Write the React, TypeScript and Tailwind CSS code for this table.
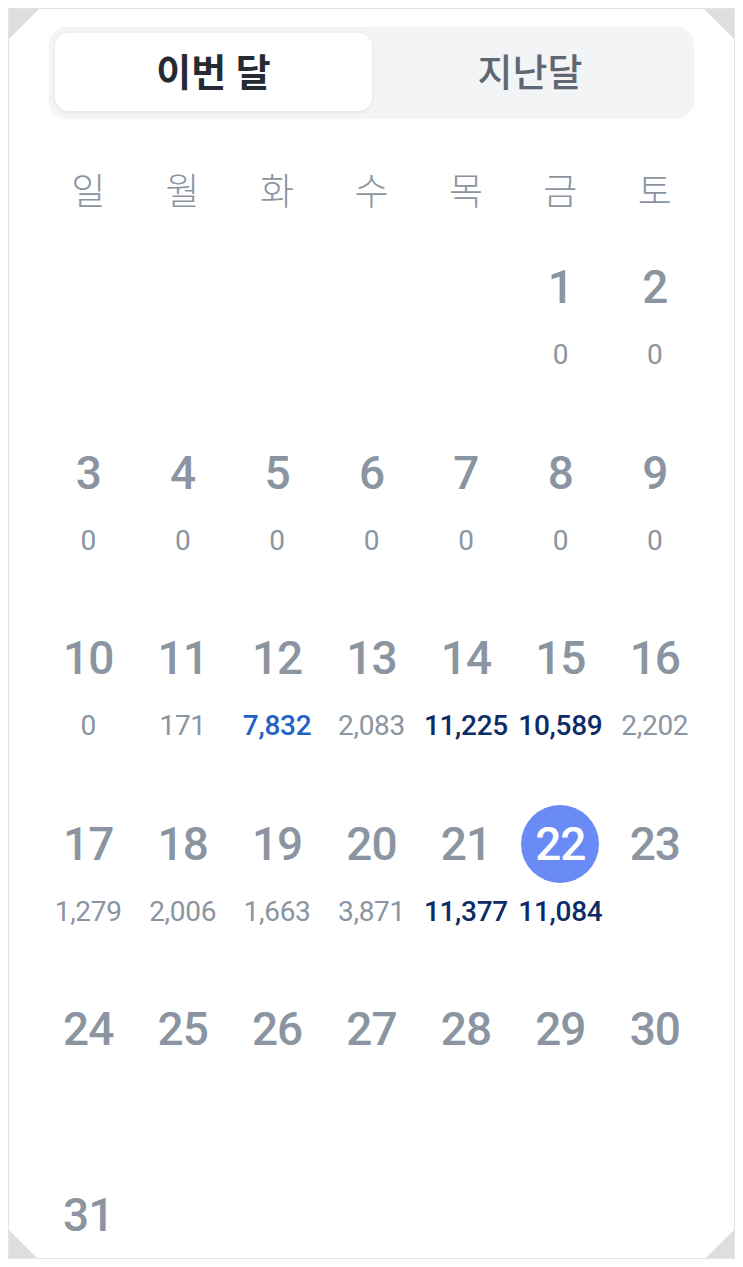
import React from "react";

type Tone = "gray" | "blue" | "navy";
type Day = { d: number; amt?: string; tone?: Tone; today?: boolean } | null;

const weeks: Day[][] = [
  [null, null, null, null, null, { d: 1, amt: "0" }, { d: 2, amt: "0" }],
  [
    { d: 3, amt: "0" },
    { d: 4, amt: "0" },
    { d: 5, amt: "0" },
    { d: 6, amt: "0" },
    { d: 7, amt: "0" },
    { d: 8, amt: "0" },
    { d: 9, amt: "0" },
  ],
  [
    { d: 10, amt: "0" },
    { d: 11, amt: "171" },
    { d: 12, amt: "7,832", tone: "blue" },
    { d: 13, amt: "2,083" },
    { d: 14, amt: "11,225", tone: "navy" },
    { d: 15, amt: "10,589", tone: "navy" },
    { d: 16, amt: "2,202" },
  ],
  [
    { d: 17, amt: "1,279" },
    { d: 18, amt: "2,006" },
    { d: 19, amt: "1,663" },
    { d: 20, amt: "3,871" },
    { d: 21, amt: "11,377", tone: "navy" },
    { d: 22, amt: "11,084", tone: "navy", today: true },
    { d: 23 },
  ],
  [{ d: 24 }, { d: 25 }, { d: 26 }, { d: 27 }, { d: 28 }, { d: 29 }, { d: 30 }],
  [{ d: 31 }, null, null, null, null, null, null],
];

const weekdays = ["일", "월", "화", "수", "목", "금", "토"];

const font = { fontFamily: '"Roboto", "Noto Sans CJK KR", sans-serif' };

function Cell({ day }: { day: Day }) {
  if (!day) return <div />;
  const toneCls =
    day.tone === "blue"
      ? "text-[#1f63c6] font-medium"
      : day.tone === "navy"
      ? "text-[#0c2c66] font-medium"
      : "text-[#8b95a1] font-normal";
  return (
    <div className="flex flex-col items-center">
      <div className="h-[78px] flex items-center justify-center">
        {day.today ? (
          <div className="w-[78px] h-[78px] rounded-full bg-[#6a8bf5] flex items-center justify-center text-white text-[46px] font-medium tracking-[-1px] leading-none">
            {day.d}
          </div>
        ) : (
          <span className="text-[46px] font-medium text-[#8b95a1] tracking-[-1px] leading-none">
            {day.d}
          </span>
        )}
      </div>
      {day.amt && (
        <div
          className={`mt-[11px] h-[36px] flex items-center justify-center whitespace-nowrap text-[28px] leading-none tracking-[-0.3px] ${toneCls}`}
        >
          {day.amt}
        </div>
      )}
    </div>
  );
}

export default function App() {
  return (
    <div className="w-[743px] h-[1267px] bg-white overflow-hidden pt-2 px-2" style={font}>
      <div className="relative h-[1251px] border border-[#e4e4e4] overflow-hidden bg-white">
        {/* corner triangles */}
        <div className="absolute top-0 left-0 w-[30px] h-[30px] bg-[#dedede] [clip-path:polygon(0_0,100%_0,0_100%)] z-10" />
        <div className="absolute top-0 right-0 w-[30px] h-[30px] bg-[#dedede] [clip-path:polygon(0_0,100%_0,100%_100%)] z-10" />
        <div className="absolute bottom-0 left-0 w-[28px] h-[28px] bg-[#dedede] [clip-path:polygon(0_0,100%_100%,0_100%)] z-10" />
        <div className="absolute bottom-0 right-0 w-[28px] h-[28px] bg-[#dedede] [clip-path:polygon(100%_0,100%_100%,0_100%)] z-10" />

        {/* tabs */}
        <div className="px-10 pt-[18px]">
          <div className="h-[91px] bg-[#f2f4f6] rounded-[18px] p-[6px] flex shadow-[0_1px_2px_rgba(0,0,0,0.04)]">
            <div className="w-[317px] h-[78px] bg-white rounded-[14px] shadow-[0_1px_4px_rgba(0,0,0,0.08)] flex items-center justify-center text-[38px] font-bold text-[#262b33] pt-[2px]">
              이번 달
            </div>
            <div className="flex-1 flex items-center justify-center text-[38px] font-medium text-[#5f6773] pt-[2px]">
              지난달
            </div>
          </div>
        </div>

        {/* weekdays */}
        <div className="px-8 mt-[55px] grid grid-cols-7">
          {weekdays.map((w) => (
            <div
              key={w}
              className="h-[40px] flex items-center justify-center text-[37px] font-light text-[#8b95a1]"
            >
              {w}
            </div>
          ))}
        </div>

        {/* calendar */}
        <div className="px-8 mt-[35px] flex flex-col">
          {weeks.map((wk, i) => (
            <div key={i} className="grid grid-cols-7 h-[185.5px] shrink-0">
              {wk.map((day, j) => (
                <Cell key={j} day={day} />
              ))}
            </div>
          ))}
        </div>
      </div>
    </div>
  );
}
